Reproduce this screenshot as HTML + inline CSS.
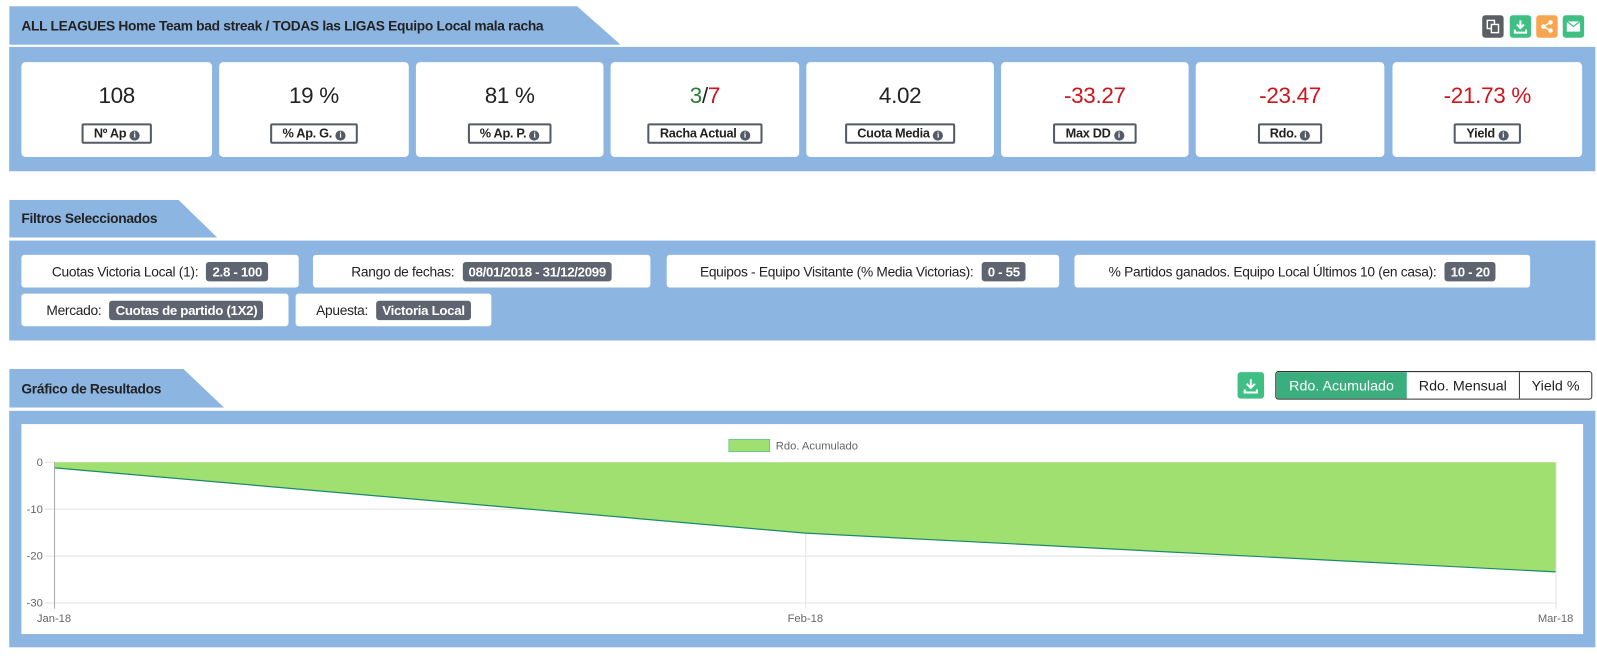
<!DOCTYPE html>
<html><head><meta charset="utf-8"><style>
*{box-sizing:border-box;margin:0;padding:0}
body{width:1597px;height:651px;background:#fff;font-family:"Liberation Sans",sans-serif;color:#222;position:relative;overflow:hidden}
#w{position:absolute;left:0;top:0;width:1567px;height:639px;transform:scale(1.0194);transform-origin:0 0}
.tab{position:absolute;left:9px;background:#8db5e2;font-weight:bold;font-size:13.5px;padding-left:12px;display:flex;align-items:center;letter-spacing:-0.3px}
.panel{position:absolute;left:9px;width:1556px;background:#8db5e2}
.card{position:absolute;top:61px;height:93px;background:#fff;border-radius:4px;text-align:center}
.card .v{font-size:22px;margin-top:20px;height:26px;letter-spacing:-0.3px}
.card .l{display:inline-block;margin-top:14px;border:2px solid #555b66;border-radius:2px;font-weight:bold;font-size:12.5px;padding:1px 10px;letter-spacing:-0.3px}
.i{display:inline-block;width:10px;height:10px;border-radius:50%;background:#555b66;color:#fff;font-size:8px;line-height:10px;text-align:center;vertical-align:0px;font-family:"Liberation Serif",serif;font-weight:bold}
.red{color:#d0121c}
.chip{position:absolute;height:32px;background:#fff;border-radius:3px;display:flex;align-items:center;justify-content:center;font-size:13.5px;letter-spacing:-0.3px}
.b{background:#5e6470;color:#fff;font-weight:bold;border-radius:3px;padding:2px 6px;margin-left:8px;font-size:13px}
.ib{position:absolute;top:15px;width:21px;height:22px;border-radius:3px}
</style></head><body><div id="w">

<div class="tab" style="top:6px;height:38px;width:600px;clip-path:polygon(0 0,557px 0,100% 100%,0 100%)">ALL LEAGUES Home Team bad streak / TODAS las LIGAS Equipo Local mala racha</div>
<div class="ib" style="left:1454px;background:#5b5e62"><svg width="21" height="22"><rect x="5" y="5" width="7" height="8" fill="none" stroke="#fff" stroke-width="1.4"/><rect x="9" y="9" width="7" height="8" fill="#5b5e62" stroke="#fff" stroke-width="1.4"/></svg></div>
<div class="ib" style="left:1481px;background:#3fbf84"><svg width="21" height="22"><path d="M10.5 5v7M7 9l3.5 3.5L14 9M5 14v3h11v-3" stroke="#fff" stroke-width="2" fill="none"/></svg></div>
<div class="ib" style="left:1507px;background:#f7a54f"><svg width="21" height="22"><circle cx="7" cy="11" r="2.2" fill="#fff"/><circle cx="14" cy="7" r="2.2" fill="#fff"/><circle cx="14" cy="15" r="2.2" fill="#fff"/><path d="M7 11L14 7M7 11l7 4" stroke="#fff" stroke-width="1.4"/></svg></div>
<div class="ib" style="left:1533px;background:#3fbf84"><svg width="21" height="22"><rect x="4" y="6" width="13" height="10" fill="#fff"/><path d="M4 6l6.5 5L17 6" stroke="#3fbf84" stroke-width="1.2" fill="none"/></svg></div>

<div class="panel" style="top:46px;height:122px"></div>
<div class="card" style="left:21px;width:187px"><div class="v">108</div><div class="l">Nº Ap <span class="i">i</span></div></div>
<div class="card" style="left:215px;width:186px"><div class="v">19 %</div><div class="l">% Ap. G. <span class="i">i</span></div></div>
<div class="card" style="left:408px;width:184px"><div class="v">81 %</div><div class="l">% Ap. P. <span class="i">i</span></div></div>
<div class="card" style="left:599px;width:185px"><div class="v"><span style="color:#2e7d32">3</span>/<span class="red">7</span></div><div class="l">Racha Actual <span class="i">i</span></div></div>
<div class="card" style="left:791px;width:184px"><div class="v">4.02</div><div class="l">Cuota Media <span class="i">i</span></div></div>
<div class="card" style="left:982px;width:184px"><div class="v red">-33.27</div><div class="l">Max DD <span class="i">i</span></div></div>
<div class="card" style="left:1173px;width:185px"><div class="v red">-23.47</div><div class="l">Rdo. <span class="i">i</span></div></div>
<div class="card" style="left:1366px;width:186px"><div class="v red">-21.73 %</div><div class="l">Yield <span class="i">i</span></div></div>

<div class="tab" style="top:196px;height:37px;width:204px;clip-path:polygon(0 0,166px 0,100% 100%,0 100%)">Filtros Seleccionados</div>
<div class="panel" style="top:236px;height:98px"></div>
<div class="chip" style="left:21px;top:250px;width:272px">Cuotas Victoria Local (1):<span class="b">2.8 - 100</span></div>
<div class="chip" style="left:307px;top:250px;width:331px">Rango de fechas:<span class="b">08/01/2018 - 31/12/2099</span></div>
<div class="chip" style="left:654px;top:250px;width:385px">Equipos - Equipo Visitante (% Media Victorias):<span class="b">0 - 55</span></div>
<div class="chip" style="left:1054px;top:250px;width:447px">% Partidos ganados. Equipo Local Últimos 10 (en casa):<span class="b">10 - 20</span></div>
<div class="chip" style="left:21px;top:288px;width:262px">Mercado:<span class="b">Cuotas de partido (1X2)</span></div>
<div class="chip" style="left:290px;top:288px;width:192px">Apuesta:<span class="b">Victoria Local</span></div>

<div class="tab" style="top:362px;height:38px;width:211px;clip-path:polygon(0 0,171px 0,100% 100%,0 100%)">Gráfico de Resultados</div>
<div style="position:absolute;left:1214px;top:365px;width:26px;height:26px;background:#3fbf84;border-radius:3px"><svg width="26" height="26"><path d="M13 7v8M9 11.5l4 4 4-4M7 17v3h12v-3" stroke="#fff" stroke-width="2" fill="none"/></svg></div>
<div style="position:absolute;left:1251px;top:364px;width:311px;height:28px;border:1px solid #333;border-radius:3px;display:flex;font-size:14px;overflow:hidden">
<div style="width:128px;background:#3aae7c;color:#fff;display:flex;align-items:center;justify-content:center">Rdo. Acumulado</div>
<div style="width:111px;border-right:1px solid #333;display:flex;align-items:center;justify-content:center">Rdo. Mensual</div>
<div style="flex:1;display:flex;align-items:center;justify-content:center">Yield %</div></div>
<div class="panel" style="top:403px;height:232px"></div>
<div style="position:absolute;left:21px;top:416px;width:1532px;height:206px;background:#fff"></div>
<svg style="position:absolute;left:0;top:0" width="1597" height="651" font-family="Liberation Sans,sans-serif" font-size="11" fill="#666">
<rect x="715" y="431" width="40" height="12" fill="#a0e070" stroke="#5fc48a" stroke-width="0.8"/>
<text x="761" y="441">Rdo. Acumulado</text>
<g stroke="#e3e3e3" stroke-width="1">
<line x1="44" y1="499.5" x2="1526" y2="499.5"/><line x1="44" y1="545.5" x2="1526" y2="545.5"/><line x1="44" y1="591.5" x2="1526" y2="591.5"/>
<line x1="44" y1="453.5" x2="54" y2="453.5"/>
<line x1="790.5" y1="453" x2="790.5" y2="597"/>
<line x1="1526.5" y1="453" x2="1526.5" y2="597"/>
</g>
<line x1="53.5" y1="453" x2="53.5" y2="597" stroke="#aaa"/>
<polygon points="54,453.5 1526,453.5 1526,561 790,523 54,459" fill="#a0e070"/>
<polyline points="54,459 790,523 1526,561" fill="none" stroke="#1a8a6a" stroke-width="1.2"/>
<text x="42" y="457" text-anchor="end">0</text>
<text x="42" y="503" text-anchor="end">-10</text>
<text x="42" y="549" text-anchor="end">-20</text>
<text x="42" y="595" text-anchor="end">-30</text>
<text x="53" y="610" text-anchor="middle">Jan-18</text>
<text x="790" y="610" text-anchor="middle">Feb-18</text>
<text x="1526" y="610" text-anchor="middle">Mar-18</text>
</svg>
</div></body></html>
